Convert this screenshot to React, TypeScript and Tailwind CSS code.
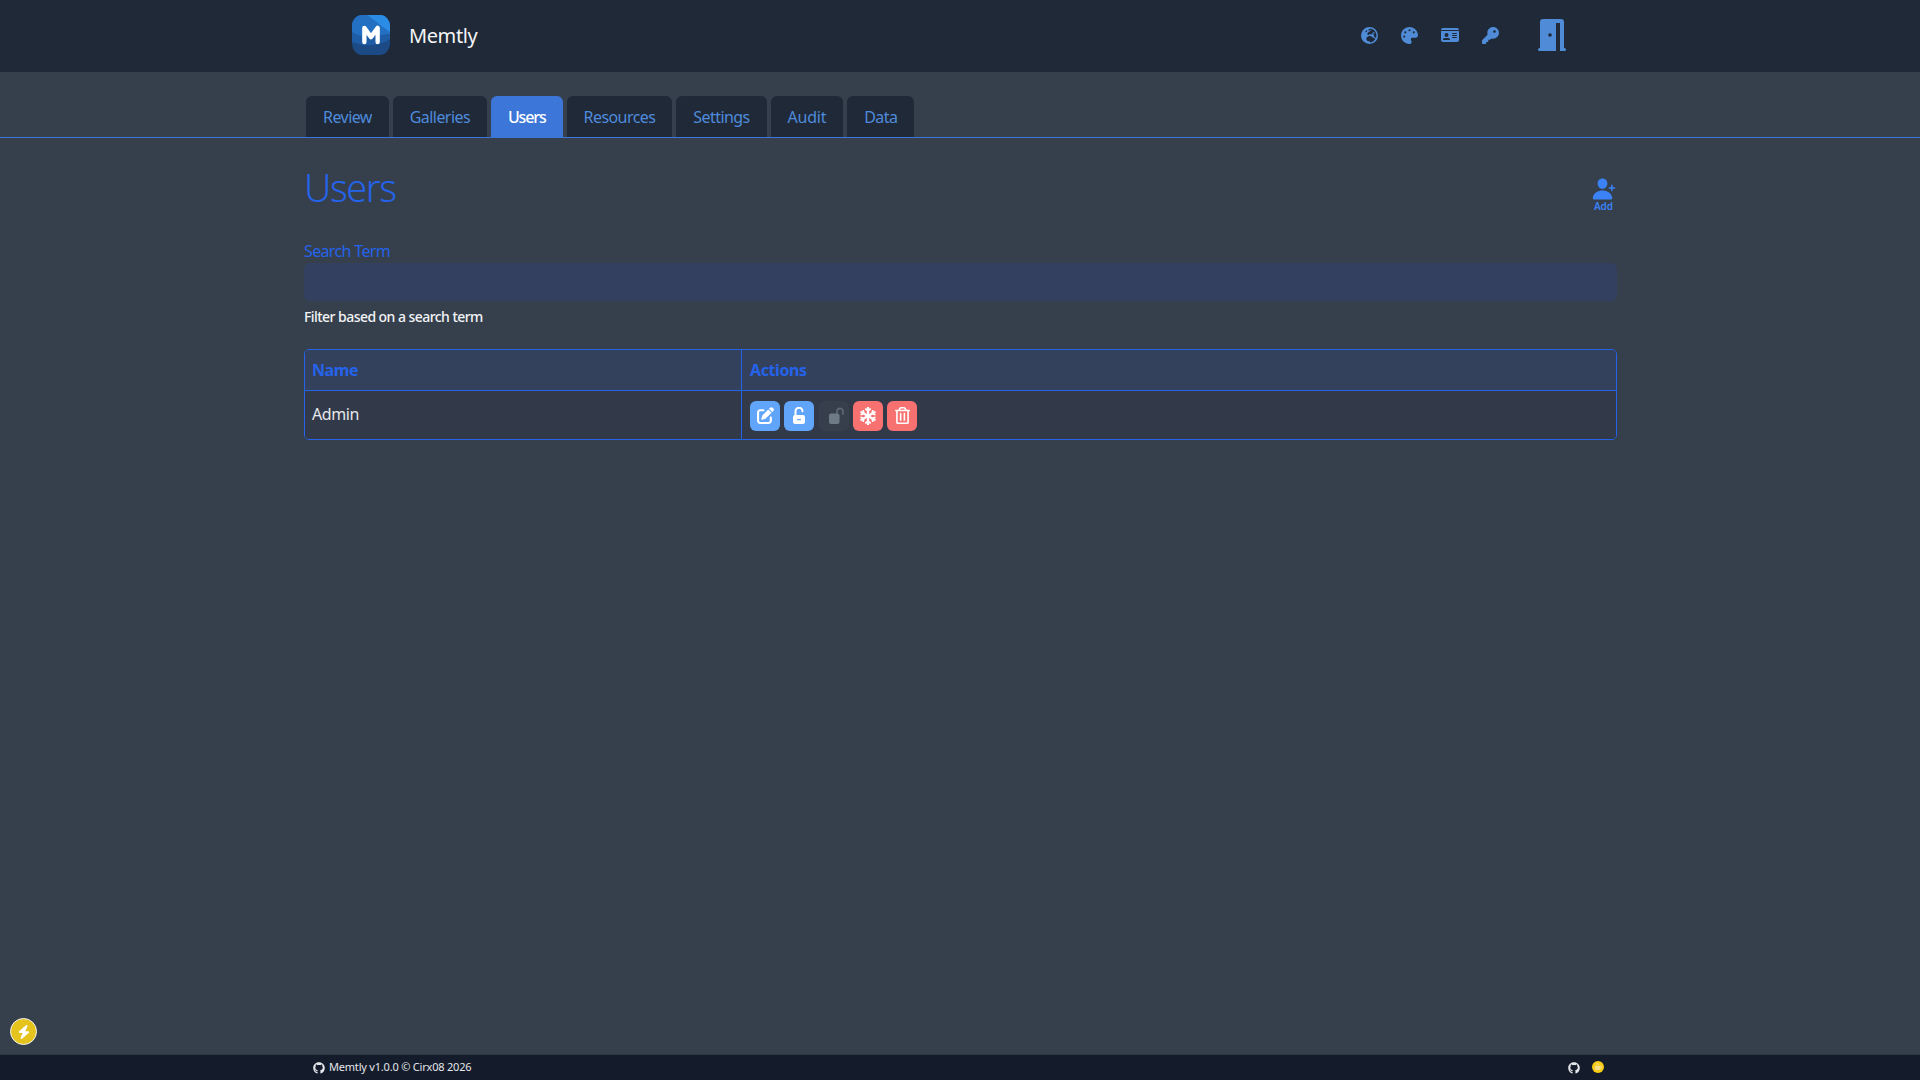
import { FaEarthEurope, FaPalette, FaIdCard, FaKey, FaPenToSquare, FaGithub, FaBolt, FaMugHot } from "react-icons/fa6";
import { FaSnowflake, FaRegTrashAlt } from "react-icons/fa";
import { IoPersonAdd } from "react-icons/io5";

const tabs = ["Review", "Galleries", "Users", "Resources", "Settings", "Audit", "Data"];

function ActionButton({ bg, color, children }: { bg: string; color: string; children: React.ReactNode }) {
  return (
    <button className={`w-[30px] h-[30px] rounded-[6px] flex items-center justify-center text-[17px] ${bg} ${color}`}>
      {children}
    </button>
  );
}

function DoorIcon() {
  return (
    <svg width="28" height="32" viewBox="0 0 28 32" className="ml-[39px]">
      <path
        fillRule="evenodd"
        fill="currentColor"
        d="M2 29V3a3 3 0 0 1 3-3h18a3 3 0 0 1 3 3v26h.5a1.5 1.5 0 0 1 0 3H22V4h-4v28H1.5a1.5 1.5 0 0 1 0-3H2zM12 14.2a1.8 1.8 0 1 0 0 3.6 1.8 1.8 0 0 0 0-3.6z"
      />
    </svg>
  );
}

function OpenLockIcon() {
  return (
    <svg width="12" height="17" viewBox="0 0 12 17">
      <path d="M2.5 9V4.2a3.5 3.5 0 0 1 7 0" fill="none" stroke="#fff" strokeWidth="2" strokeLinecap="round" />
      <path
        fillRule="evenodd"
        fill="#fff"
        d="M2 8h8a2 2 0 0 1 2 2v5a2 2 0 0 1-2 2H2a2 2 0 0 1-2-2v-5a2 2 0 0 1 2-2zm2.5 4a.5.5 0 0 0 0 1.2h3a.5.5 0 0 0 0-1.2h-3z"
      />
    </svg>
  );
}

function DisabledLockIcon() {
  return (
    <svg width="16" height="17" viewBox="0 0 16 17" className="translate-x-[3px]">
      <path d="M8 8V4.5a3 3 0 0 1 6 0V7" fill="none" stroke="#5b6572" strokeWidth="1.8" strokeLinecap="round" />
      <rect x="0" y="6.5" width="10.5" height="10.5" rx="2" fill="#6f7a87" />
    </svg>
  );
}

export default function App() {
  return (
    <div className="h-screen flex flex-col bg-[#35404c] text-white overflow-hidden font-['Noto_Sans','Liberation_Sans',sans-serif]">
      <header className="h-[72px] shrink-0 bg-[#1f2937]">
        <div className="w-[1312px] mx-auto h-full flex items-center pl-[48px] pr-[50px]">
          <svg width="38" height="40" viewBox="0 0 40 40" preserveAspectRatio="none" className="shrink-0 -translate-y-[1px]">
            <rect width="40" height="40" rx="11" fill="#1b4a85" />
            <path d="M0 27V11A11 11 0 0 1 11 0h18a11 11 0 0 1 11 11v13C30 31 12 32 0 27z" fill="#1f5ca6" />
            <path d="M0 17V11A11 11 0 0 1 11 0h18a11 11 0 0 1 11 11v8C30 19 14 26 0 17z" fill="#2370c2" />
            <path d="M16 0h13a11 11 0 0 1 11 11v6C33 13 24 5 16 0z" fill="#2b8ce6" />
            <path d="M13 27V13l7 9 7-9v14" fill="none" stroke="#fff" strokeWidth="4.6" strokeLinecap="round" strokeLinejoin="round" />
          </svg>
          <span className="ml-[19px] text-[20px] text-[#f3f4f6] tracking-[-0.4px]">Memtly</span>
          <div className="ml-auto flex items-center text-[#4f8bd6] -translate-y-[1px]">
            <div className="flex items-center gap-[23px] text-[17px]">
              <FaEarthEurope />
              <FaPalette />
              <FaIdCard className="text-[18px]" />
              <FaKey />
            </div>
            <DoorIcon />
          </div>
        </div>
      </header>

      <nav className="shrink-0 pt-[24px] border-b border-[#3b76d8]">
        <div className="w-[1312px] mx-auto flex gap-[3.8px] pl-[2px] h-[41px]">
          {tabs.map((t) => (
            <div
              key={t}
              className={
                t === "Users"
                  ? "px-[17px] rounded-t-[6px] flex items-center text-[16px] tracking-[-1.1px] font-medium bg-[#3b76d8] text-white"
                  : t === "Audit"
                    ? "px-[17px] rounded-t-[6px] flex items-center text-[16px] tracking-[-0.2px] bg-[#1f2937] text-[#4f8bdc]"
                    : "px-[17px] rounded-t-[6px] flex items-center text-[16px] tracking-[-0.55px] bg-[#1f2937] text-[#4f8bdc]"
              }
            >
              {t}
            </div>
          ))}
        </div>
      </nav>

      <main className="flex-1 w-[1313px] mx-auto pl-[0.5px]">
        <div className="flex justify-between pt-[19px]">
          <h1 className="text-[38px] leading-[60px] font-light text-[#2563eb] tracking-[-1.5px]">Users</h1>
          <div className="flex flex-col items-center pt-[20px] pr-[1px] text-[#3b82f6]">
            <IoPersonAdd className="text-[24px] -scale-x-100" />
            <span className="text-[10px] font-semibold leading-[11px]">Add</span>
          </div>
        </div>
        <label className="block mt-[22px] text-[16px] leading-[24px] text-[#2563eb] tracking-[-0.65px]">Search Term</label>
        <div className="h-[38px] rounded-[6px] bg-[#334060]" />
        <p className="mt-[6px] text-[14px] leading-[20px] font-medium text-[#f3f4f6] tracking-[-0.55px]">Filter based on a search term</p>

        <div className="mt-[22px] border border-[#2563eb] rounded-[5px] overflow-hidden">
          <div className="flex h-[41px] bg-[#33415c] border-b border-[#2563eb] font-bold text-[16px] text-[#2563eb] tracking-[-0.4px]">
            <div className="w-[437px] border-r border-[#2563eb] px-[7px] flex items-center">Name</div>
            <div className="flex-1 px-[8px] flex items-center">Actions</div>
          </div>
          <div className="flex h-[48px] bg-[#323a4a]">
            <div className="w-[437px] border-r border-[#2563eb] px-[7px] pb-[3px] flex items-center text-[16px] text-[#e5e7eb] tracking-[-0.4px]">Admin</div>
            <div className="flex-1 px-[8px] pt-[1px] flex items-center gap-[4.3px]">
              <ActionButton bg="bg-[#60a5fa]" color="text-white"><FaPenToSquare /></ActionButton>
              <ActionButton bg="bg-[#60a5fa]" color="text-white"><OpenLockIcon /></ActionButton>
              <ActionButton bg="bg-[#373f4d]" color="text-[#6b7280]"><DisabledLockIcon /></ActionButton>
              <ActionButton bg="bg-[#f87171]" color="text-white"><FaSnowflake className="text-[18px]" /></ActionButton>
              <ActionButton bg="bg-[#f87171]" color="text-white"><FaRegTrashAlt className="text-[17px]" /></ActionButton>
            </div>
          </div>
        </div>
      </main>

      <div className="shrink-0 h-0 relative">
        <button className="absolute left-[10px] bottom-[9px] w-[27px] h-[27px] rounded-full bg-[#e3c31c] border border-[#f3f4f6] flex items-center justify-center text-white text-[14px]">
          <FaBolt />
        </button>
      </div>

      <footer className="shrink-0 h-[26px] bg-[#141b2a] border-t border-[#2f3744]">
        <div className="w-[1312px] mx-auto h-full flex items-center pl-[9px] pr-[12px] text-[11px] text-[#e5e7eb]">
          <FaGithub className="text-[12px] mr-[4px]" />
          <span className="tracking-[-0.2px]">Memtly v1.0.0 © Cirx08 2026</span>
          <div className="ml-auto flex items-center gap-[12px]">
            <FaGithub className="text-[12px]" />
            <span className="w-[12px] h-[12px] rounded-full bg-[#facc15] flex items-center justify-center text-[#f5e08a] text-[7px] -translate-y-[1px]"><FaMugHot /></span>
          </div>
        </div>
      </footer>
    </div>
  );
}
